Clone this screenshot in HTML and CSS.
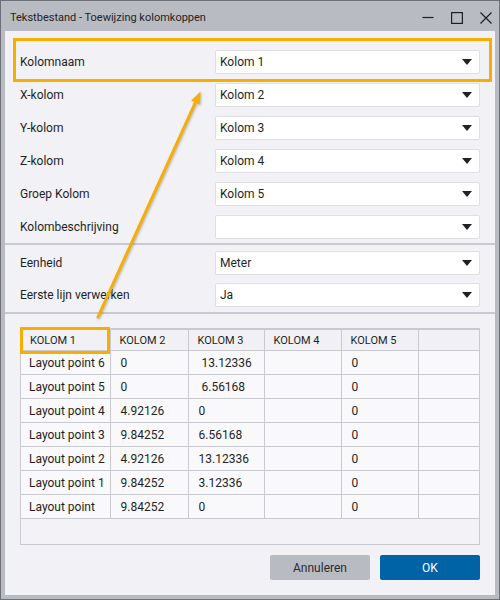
FILE: index.html
```html
<!DOCTYPE html>
<html>
<head>
<meta charset="utf-8">
<link rel="stylesheet" href="styles.css">
</head>
<body>
<div class="window">
  <div class="titlebar">
    <span class="title">Tekstbestand - Toewijzing kolomkoppen</span>
    <div class="controls">
      <svg class="ctl" width="12" height="12" viewBox="0 0 12 12"><path d="M0.5 5.5H11.5" stroke="#1f1f24" stroke-width="1.2" fill="none"/></svg>
      <svg class="ctl" width="12" height="12" viewBox="0 0 12 12"><rect x="0.6" y="0.6" width="10.8" height="10.8" stroke="#1f1f24" stroke-width="1.2" fill="none"/></svg>
      <svg class="ctl" width="12" height="12" viewBox="0 0 12 12"><path d="M0.5 0.5L11.5 11.5M11.5 0.5L0.5 11.5" stroke="#1f1f24" stroke-width="1.2" fill="none"/></svg>
    </div>
  </div>
  <div class="content">
    <div class="section first">
      <div class="row"><span class="label">Kolomnaam</span><div class="select"><span>Kolom 1</span><i class="caret"></i></div></div>
      <div class="row"><span class="label">X-kolom</span><div class="select"><span>Kolom 2</span><i class="caret"></i></div></div>
      <div class="row"><span class="label">Y-kolom</span><div class="select"><span>Kolom 3</span><i class="caret"></i></div></div>
      <div class="row"><span class="label">Z-kolom</span><div class="select"><span>Kolom 4</span><i class="caret"></i></div></div>
      <div class="row"><span class="label">Groep Kolom</span><div class="select"><span>Kolom 5</span><i class="caret"></i></div></div>
      <div class="row"><span class="label">Kolombeschrijving</span><div class="select"><span></span><i class="caret"></i></div></div>
    </div>
    <div class="sep sep1"></div>
    <div class="section second">
      <div class="row"><span class="label">Eenheid</span><div class="select"><span>Meter</span><i class="caret"></i></div></div>
      <div class="row"><span class="label">Eerste lijn verwerken</span><div class="select"><span>Ja</span><i class="caret"></i></div></div>
    </div>
    <div class="sep sep2"></div>
    <div class="grid-wrap">
      <table class="grid">
        <colgroup><col class="c1"><col class="c2"><col class="c3"><col class="c4"><col class="c5"><col class="c6"></colgroup>
        <thead>
          <tr><th>KOLOM 1</th><th>KOLOM 2</th><th>KOLOM 3</th><th>KOLOM 4</th><th>KOLOM 5</th><th></th></tr>
        </thead>
        <tbody>
          <tr><td class="first-col">Layout point 6</td><td>0</td><td>&nbsp;13.12336</td><td></td><td>0</td><td></td></tr>
          <tr><td class="first-col">Layout point 5</td><td>0</td><td>&nbsp;6.56168</td><td></td><td>0</td><td></td></tr>
          <tr><td class="first-col">Layout point 4</td><td>4.92126</td><td>0</td><td></td><td>0</td><td></td></tr>
          <tr><td class="first-col">Layout point 3</td><td>9.84252</td><td>6.56168</td><td></td><td>0</td><td></td></tr>
          <tr><td class="first-col">Layout point 2</td><td>4.92126</td><td>13.12336</td><td></td><td>0</td><td></td></tr>
          <tr><td class="first-col">Layout point 1</td><td>9.84252</td><td>3.12336</td><td></td><td>0</td><td></td></tr>
          <tr><td class="first-col">Layout point</td><td>9.84252</td><td>0</td><td></td><td>0</td><td></td></tr>
        </tbody>
      </table>
    </div>
    <div class="buttons">
      <button class="btn cancel">Annuleren</button>
      <button class="btn ok">OK</button>
    </div>
  </div>
  <div class="hl hl-row"></div>
  <div class="hl hl-head"></div>
  <svg class="arrow" width="500" height="600" viewBox="0 0 500 600">
    <line x1="98" y1="317" x2="196.5" y2="100" stroke="#f7ae00" stroke-width="3" stroke-linecap="round"/>
    <polygon points="200.5,91.5 191.2,100.6 199.8,104.5" fill="#f7ae00"/>
  </svg>
</div>
</body>
</html>
```

FILE: styles.css
```css
html, body {
  margin: 0;
  padding: 0;
}
body {
  font-family: Roboto, "Noto Sans", sans-serif;
  color: #1f1f24;
}
.window {
  position: relative;
  width: 500px;
  height: 600px;
  box-sizing: border-box;
  background: #b9bbc2;
  border: 1px solid #6e7078;
  padding: 0 4px 4px 4px;
  display: flex;
  flex-direction: column;
}
.titlebar {
  height: 30px;
  display: flex;
  align-items: center;
  justify-content: space-between;
  padding-left: 5px;
}
.title {
  font-size: 11px;
  color: #1f1f24;
  position: relative;
  top: 1px;
}
.controls {
  display: flex;
  gap: 17px;
  align-items: center;
  padding-right: 3px;
  padding-top: 3px;
}
.ctl {
  display: block;
}
.content {
  flex: 1;
  background: #f2f2f6;
  display: flex;
  flex-direction: column;
  padding-top: 19px;
}
.section {
  display: flex;
  flex-direction: column;
  padding: 0 15px;
}
.first {
  gap: 9px;
}
.second {
  gap: 8px;
  padding-top: 6px;
}
.row {
  display: flex;
  align-items: center;
  height: 24px;
}
.label {
  width: 195px;
  flex: none;
  font-size: 12px;
  color: #1f1f24;
}
.select {
  flex: 1;
  height: 24px;
  box-sizing: border-box;
  background: #ffffff;
  border: 1px solid #dedee3;
  border-radius: 2px;
  display: flex;
  align-items: center;
  justify-content: space-between;
  padding: 0 7px 0 4px;
  font-size: 12px;
  color: #1f1f24;
}
.caret {
  width: 0;
  height: 0;
  border-left: 5px solid transparent;
  border-right: 5px solid transparent;
  border-top: 6px solid #222226;
}
.sep {
  height: 2px;
  background: #c9cad1;
}
.sep1 {
  margin-top: 4px;
}
.sep2 {
  margin-top: 5px;
}
.grid-wrap {
  margin: 14px 15px 0 15px;
  height: 217px;
  box-sizing: border-box;
  border: 1px solid #c9cad1;
  border-top-width: 2px;
  background: #f3f3f7;
}
.grid {
  width: 100%;
  table-layout: fixed;
  border-collapse: collapse;
  font-size: 12px;
}
.c1 { width: 89px; }
.c2 { width: 78px; }
.c3 { width: 76px; }
.c4 { width: 77px; }
.c5 { width: 77px; }
.grid th {
  height: 20px;
  padding: 0 0 0 9px;
  text-align: left;
  font-weight: normal;
  font-size: 11px;
  background: #f1f1f5;
  border-right: 1px solid #c9cad1;
  border-bottom: 1px solid #c9cad1;
  color: #1f1f24;
  white-space: nowrap;
}
.grid td {
  height: 23px;
  padding: 0 0 0 10px;
  background: #f9f9fb;
  border-right: 1px solid #c9cad1;
  border-bottom: 1px solid #c9cad1;
  white-space: nowrap;
  color: #1f1f24;
}
.grid th:last-child,
.grid td:last-child {
  border-right: none;
}
.grid td.first-col {
  padding-left: 8px;
}
.buttons {
  display: flex;
  justify-content: flex-end;
  gap: 10px;
  margin: 10px 15px 0 0;
}
.btn {
  width: 100px;
  height: 25px;
  border: none;
  border-radius: 2px;
  font-family: Roboto, "Noto Sans", sans-serif;
  font-size: 12px;
  padding: 0;
}
.cancel {
  background: #b9bbc2;
  color: #2a2a30;
}
.ok {
  background: #0063a6;
  color: #ffffff;
}
.hl {
  position: absolute;
  box-sizing: border-box;
  border: 3px solid #f7ae00;
}
.hl-row {
  left: 12px;
  top: 37px;
  width: 479px;
  height: 44px;
}
.hl-head {
  left: 19px;
  top: 326px;
  width: 90px;
  height: 27px;
}
.arrow {
  position: absolute;
  left: -1px;
  top: -1px;
  filter: drop-shadow(1px 1px 1px rgba(0, 0, 0, 0.25));
  pointer-events: none;
}
```
